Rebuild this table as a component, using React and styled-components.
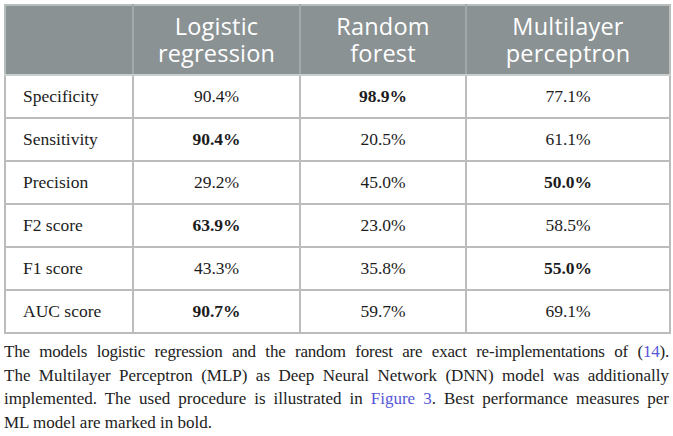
import React from "react";
import styled, { createGlobalStyle } from "styled-components";

const GlobalStyle = createGlobalStyle`
  html, body {
    margin: 0;
    padding: 0;
    background: #fff;
  }
  body {
    padding: 4px 4px 0 4px;
  }
`;

const Wrapper = styled.div`
  width: 665px;
`;

const Table = styled.table`
  width: 665px;
  border-collapse: collapse;
  table-layout: fixed;
  border: 2px solid #b9bdbb;
`;

const HeadCell = styled.th`
  height: 68px;
  padding: 0 6px;
  background: #8b9294;
  color: #fff;
  font-family: "Open Sans", "Noto Sans", sans-serif;
  font-weight: 400;
  font-size: 23.5px;
  line-height: 27px;
  letter-spacing: 0.2px;
  text-align: center;
  border-left: 2px solid #a3a9aa;
  border-bottom: 2px solid #c9cfcc;

  &:first-child {
    border-left: none;
  }
`;

const Cell = styled.td`
  height: 41px;
  padding: 0 0 0 ${(p) => (p.$label ? "17px" : "0")};
  font-family: "Liberation Serif", "Times New Roman", serif;
  font-size: 17.5px;
  font-weight: ${(p) => (p.$bold ? 700 : 400)};
  color: #1c1c1c;
  text-align: ${(p) => (p.$label ? "left" : "center")};
  border: 2px solid #bcbcbc;
`;

const Caption = styled.div`
  margin: 6px 0 0 0;
  font-family: "Liberation Serif", "Times New Roman", serif;
  font-size: 17px;
  line-height: 23.6px;
  color: #222;
`;

const Line = styled.span`
  display: block;
  white-space: nowrap;
  text-align: ${(p) => (p.$last ? "left" : "justify")};
  text-align-last: ${(p) => (p.$last ? "left" : "justify")};
  letter-spacing: ${(p) => p.$tight || "0"};
`;

const Ref = styled.span`
  color: #5656d8;
`;

const rows = [
  { name: "Specificity", vals: ["90.4%", "98.9%", "77.1%"], best: 1 },
  { name: "Sensitivity", vals: ["90.4%", "20.5%", "61.1%"], best: 0 },
  { name: "Precision", vals: ["29.2%", "45.0%", "50.0%"], best: 2 },
  { name: "F2 score", vals: ["63.9%", "23.0%", "58.5%"], best: 0 },
  { name: "F1 score", vals: ["43.3%", "35.8%", "55.0%"], best: 2 },
  { name: "AUC score", vals: ["90.7%", "59.7%", "69.1%"], best: 0 },
];

const App = () => {
  return (
    <Wrapper>
      <GlobalStyle />
      <Table>
        <colgroup>
          <col style={{ width: 128 }} />
          <col style={{ width: 167 }} />
          <col style={{ width: 166 }} />
          <col style={{ width: 204 }} />
        </colgroup>
        <thead>
          <tr>
            <HeadCell />
            <HeadCell>Logistic<br />regression</HeadCell>
            <HeadCell>Random<br />forest</HeadCell>
            <HeadCell>Multilayer<br />perceptron</HeadCell>
          </tr>
        </thead>
        <tbody>
          {rows.map((r) => (
            <tr key={r.name}>
              <Cell $label>{r.name}</Cell>
              {r.vals.map((v, i) => (
                <Cell key={i} $bold={i === r.best}>{v}</Cell>
              ))}
            </tr>
          ))}
        </tbody>
      </Table>
      <Caption>
        <Line $tight="-0.2px">
          The models logistic regression and the random forest are exact re-implementations of (<Ref>14</Ref>).
        </Line>
        <Line>
          The Multilayer Perceptron (MLP) as Deep Neural Network (DNN) model was additionally
        </Line>
        <Line>
          implemented. The used procedure is illustrated in <Ref>Figure 3</Ref>. Best performance measures per
        </Line>
        <Line $last>ML model are marked in bold.</Line>
      </Caption>
    </Wrapper>
  );
};

export default App;
